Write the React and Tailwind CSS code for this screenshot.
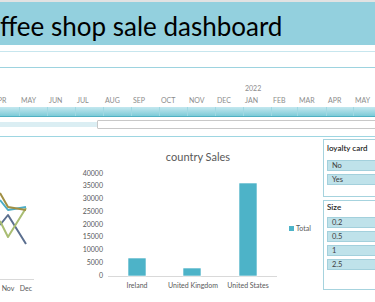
import React from "react";

const months = [
  { m: "APR", w: "w-[28px]" },
  { m: "MAY", w: "w-[28px]" },
  { m: "JUN", w: "w-[28px]" },
  { m: "JUL", w: "w-[28px]" },
  { m: "AUG", w: "w-[28px]" },
  { m: "SEP", w: "w-[28px]" },
  { m: "OCT", w: "w-[28px]" },
  { m: "NOV", w: "w-[28px]" },
  { m: "DEC", w: "w-[28px]" },
  { m: "JAN", w: "w-[28px]", y: "2022" },
  { m: "FEB", w: "w-[26px]" },
  { m: "MAR", w: "w-[29px]" },
  { m: "APR", w: "w-[27px]" },
  { m: "MAY", w: "w-[28px]" },
];

function LineChart() {
  return (
    <svg width="80" height="165" className="block shrink-0">
      <line x1="0" y1="142.5" x2="34" y2="142.5" stroke="#d9d9d9" strokeWidth="1" />
      <polyline points="0,88 8,78 26,107" fill="none" stroke="#5b6f8f" strokeWidth="2" strokeLinejoin="round" />
      <polyline points="0,84 8,100 26,71" fill="none" stroke="#a9bd73" strokeWidth="2" strokeLinejoin="round" />
      <polyline points="0,63 8,73 26,70" fill="none" stroke="#4bacc6" strokeWidth="2" strokeLinejoin="round" />
      <polyline points="0,56 8,70 26,73" fill="none" stroke="#a08f44" strokeWidth="2" strokeLinejoin="round" />
      <text x="8" y="154" fontSize="7" fill="#595959" textAnchor="middle">Nov</text>
      <text x="26" y="154" fontSize="7" fill="#595959" textAnchor="middle">Dec</text>
    </svg>
  );
}

function BarChart() {
  const ticks = [40000, 35000, 30000, 25000, 20000, 15000, 10000, 5000, 0];
  const bars = [
    { x: 48, top: 121, label: "Ireland", cx: 57 },
    { x: 103, top: 131, label: "United Kingdom", cx: 113 },
    { x: 159, top: 46, label: "United States", cx: 168 },
  ];
  return (
    <svg width="243" height="165" className="block shrink-0">
      <text x="118" y="24" fontSize="11" fill="#595959" textAnchor="middle">country Sales</text>
      {ticks.map((t, i) => (
        <text key={t} x="23" y={36 + i * 12.75 + 2.5} fontSize="7" fill="#595959" textAnchor="end">
          {t}
        </text>
      ))}
      <line x1="28" y1="139.5" x2="197" y2="139.5" stroke="#d9d9d9" strokeWidth="1" />
      {bars.map((b) => (
        <g key={b.label}>
          <rect x={b.x} y={b.top} width="18" height={139 - b.top} fill="#4db3c8" stroke="#ffffff" strokeWidth="0.6" />
          <text x={b.cx} y="151" fontSize="7" fill="#595959" textAnchor="middle">{b.label}</text>
        </g>
      ))}
      <rect x="209" y="89" width="5" height="5" fill="#4db3c8" />
      <text x="216" y="94" fontSize="7" fill="#595959">Total</text>
    </svg>
  );
}

function Slicer({ title, items, pt, gapTop, pb }) {
  return (
    <div className={`w-[80px] border border-[#a6d3de] bg-white px-[3px] ${pt} ${pb}`}>
      <div className="h-[12px] leading-[12px] text-[8px] font-semibold text-[#262626] whitespace-nowrap">{title}</div>
      <div className={`flex flex-col gap-[3px] ${gapTop}`}>
        {items.map((it) => (
          <div
            key={it}
            className="h-[11px] leading-[9px] bg-[#bfe2ea] border border-[#a3d0dc] pl-[4px] text-[7.5px] text-[#404040]"
          >
            {it}
          </div>
        ))}
      </div>
    </div>
  );
}

export default function App() {
  return (
    <div className="w-[375px] h-[302px] overflow-hidden bg-white font-['Lato',sans-serif]">
      <div className="h-[2px] bg-[#e2e2e2]" />
      <div className="h-[43px] bg-[#93d0de] overflow-hidden pt-[3px]">
        <span className="block text-[26px] leading-[43px] text-black whitespace-nowrap">ffee shop sale dashboard</span>
      </div>
      <div className="h-[6px]" />
      <div className="h-px bg-[#c7e6ee]" />
      <div className="h-[15px]" />
      <div className="h-px bg-[#9dd3df]" />
      <div className="flex -ml-[8px] h-[39px]">
        {months.map((c, i) => (
          <div key={i} className={`${c.w} shrink-0 pl-[1px] flex flex-col`}>
            <div className="h-[25px] flex items-end">
              <span className="text-[7px] leading-[9px] text-[#8c8c8c]">{c.y || ""}</span>
            </div>
            <div className="h-[14px] flex items-center">
              <span className="text-[7px] leading-[9px] text-[#8c8c8c]">{c.m}</span>
            </div>
          </div>
        ))}
      </div>
      <div className="flex -ml-[8px] h-[10px] bg-gradient-to-b from-[#c4e8ef] to-[#7ccbd8] border-b border-[#4fb1c3]">
        {months.map((c, i) => (
          <div key={i} className={`${c.w} shrink-0 border-r border-[#9fd8e2]`} />
        ))}
      </div>
      <div className="h-[3px]" />
      <div className="flex items-center h-[9px]">
        <div className="w-[97px] h-[5px] bg-[#dbeef3]" />
        <div className="flex-1 h-[9px] border border-[#c8c8c8] rounded-[1px] bg-white mr-[-4px]" />
      </div>
      <div className="h-[7px]" />
      <div className="h-px bg-[#9ed6e2]" />
      <div className="flex h-[165px]">
        <LineChart />
        <BarChart />
        <div className="w-[52px] overflow-hidden pt-[2px] flex flex-col gap-[3px]">
          <Slicer title="loyalty card" items={["No", "Yes"]} pt="pt-[2px]" gapTop="mt-[6px]" pb="pb-[11px]" />
          <Slicer title="Size" items={["0.2", "0.5", "1", "2.5"]} pt="pt-0" gapTop="mt-[4px]" pb="pb-[19px]" />
        </div>
      </div>
    </div>
  );
}
